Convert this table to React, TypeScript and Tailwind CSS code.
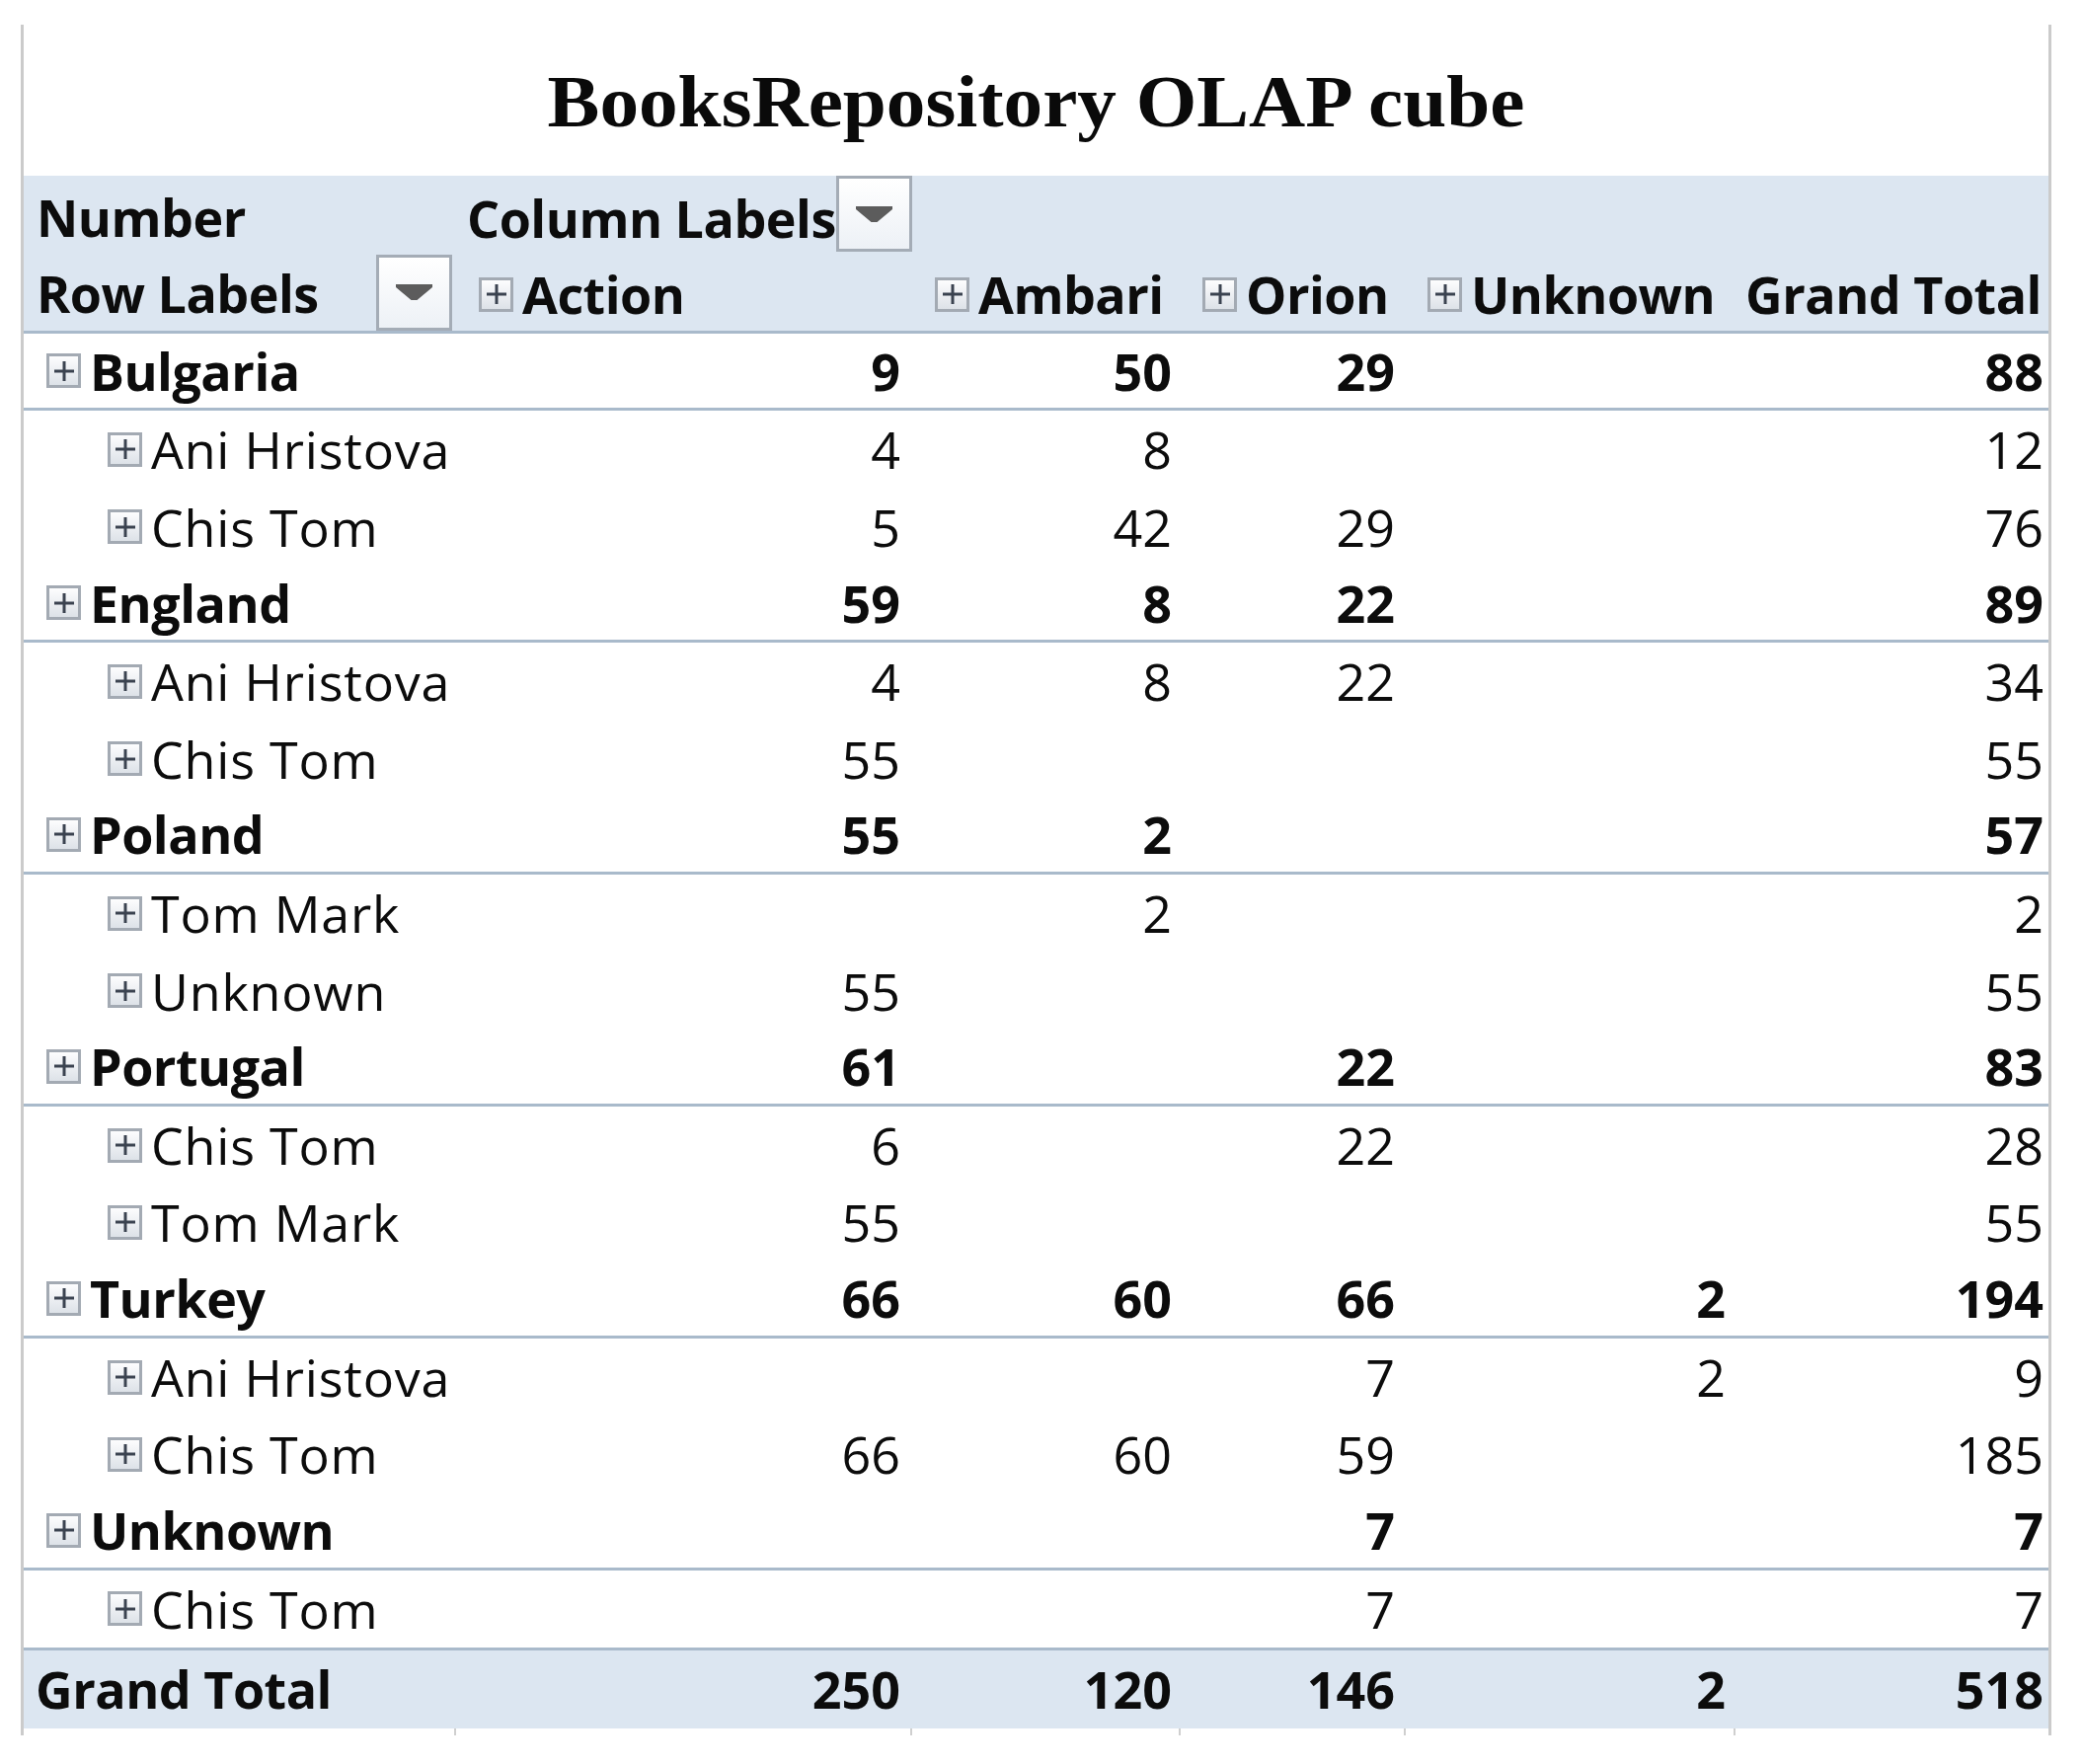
import React from "react";

type Row = { label: string; level: 0 | 1; v: (number | null)[] };

const rows: Row[] = [
  { label: "Bulgaria", level: 0, v: [9, 50, 29, null, 88] },
  { label: "Ani Hristova", level: 1, v: [4, 8, null, null, 12] },
  { label: "Chis Tom", level: 1, v: [5, 42, 29, null, 76] },
  { label: "England", level: 0, v: [59, 8, 22, null, 89] },
  { label: "Ani Hristova", level: 1, v: [4, 8, 22, null, 34] },
  { label: "Chis Tom", level: 1, v: [55, null, null, null, 55] },
  { label: "Poland", level: 0, v: [55, 2, null, null, 57] },
  { label: "Tom Mark", level: 1, v: [null, 2, null, null, 2] },
  { label: "Unknown", level: 1, v: [55, null, null, null, 55] },
  { label: "Portugal", level: 0, v: [61, null, 22, null, 83] },
  { label: "Chis Tom", level: 1, v: [6, null, 22, null, 28] },
  { label: "Tom Mark", level: 1, v: [55, null, null, null, 55] },
  { label: "Turkey", level: 0, v: [66, 60, 66, 2, 194] },
  { label: "Ani Hristova", level: 1, v: [null, null, 7, 2, 9] },
  { label: "Chis Tom", level: 1, v: [66, 60, 59, null, 185] },
  { label: "Unknown", level: 0, v: [null, null, 7, null, 7] },
  { label: "Chis Tom", level: 1, v: [null, null, 7, null, 7] },
];

const grand = [250, 120, 146, 2, 518];

const numPad = ["pr-[11px]", "pr-[8px]", "pr-[10px]", "pr-[9px]", "pr-[5px]"];

const gridCols = "grid grid-cols-[437px_462px_272px_228px_334px_318px]";

function PlusBox({ className = "" }: { className?: string }) {
  return (
    <span
      className={`flex h-[35px] w-[35px] shrink-0 items-center justify-center border-[3px] border-[#a3aab3] bg-linear-to-b from-[#fdfdfe] to-[#dde2e8] ${className}`}
    >
      <svg width="20" height="20" viewBox="0 0 20 20">
        <path d="M0 10H20M10 0V20" stroke="#3b4350" strokeWidth="3" />
      </svg>
    </span>
  );
}

function Dropdown({ className = "" }: { className?: string }) {
  return (
    <span
      className={`flex h-[77px] w-[77px] shrink-0 items-center justify-center border-[3px] border-[#a4acb6] bg-linear-to-b from-white to-[#edf1f6] ${className}`}
    >
      <svg width="37" height="16" viewBox="0 0 37 16">
        <path d="M0 0H37V3L21.5 16H15.5L0 3Z" fill="#5c5c5c" />
      </svg>
    </span>
  );
}

function HeadItem({ label, ml }: { label: string; ml: string }) {
  return (
    <div className={`flex items-center pt-[5px] ${ml}`}>
      <PlusBox />
      <span className="ml-[9px] whitespace-nowrap font-bold tracking-[-0.5px]">{label}</span>
    </div>
  );
}

export default function App() {
  return (
    <div className="min-h-[1787px] w-full bg-white pt-[25px]">
      <div className="ml-[21px] w-[2057px] border-x-[3px] border-[#cbcbcb]">
        <div className="h-[153px] pt-[41px] text-center">
          <span className="inline-block scale-x-[1.07] font-['Liberation_Serif',serif] text-[74px] font-bold leading-none text-[#0a0a0a]">
            BooksRepository OLAP cube
          </span>
        </div>

        <div className="font-['Open_Sans',sans-serif] text-[52px] leading-none text-[#0c0c0c]">
          {/* header row 1 */}
          <div className={`${gridCols} h-[78.5px] bg-[#dce6f1]`}>
            <div className="flex items-center pl-[13px] pt-[5px]">
              <span className="whitespace-nowrap font-bold tracking-[-0.5px]">Number</span>
            </div>
            <div className="flex items-center justify-between">
              <span className="mt-[8px] whitespace-nowrap pl-[12px] font-bold tracking-[-0.5px]">
                Column Labels
              </span>
              <Dropdown className="mr-[3px] self-start" />
            </div>
            <div />
            <div />
            <div />
            <div />
          </div>

          {/* header row 2 */}
          <div className={`${gridCols} h-[81.5px] border-b-[3px] border-[#a9bacb] bg-[#dce6f1]`}>
            <div className="flex items-center justify-between">
              <span className="mt-[3px] whitespace-nowrap pl-[13px] font-bold tracking-[-0.5px]">
                Row Labels
              </span>
              <Dropdown className="mr-[3px] mt-[1px] self-start" />
            </div>
            <HeadItem label="Action" ml="ml-[24px]" />
            <HeadItem label="Ambari" ml="ml-[24px]" />
            <HeadItem label="Orion" ml="ml-[23px]" />
            <HeadItem label="Unknown" ml="ml-[23px]" />
            <div className="flex items-center pl-[11px] pt-[5px]">
              <span className="whitespace-nowrap font-bold tracking-[-0.5px]">Grand Total</span>
            </div>
          </div>

          {/* body */}
          {rows.map((r, i) => {
            const country = r.level === 0;
            return (
              <div
                key={i}
                className={`${gridCols} h-[78.3px] ${
                  country ? "border-b-[3px] border-[#a9bacb] font-bold" : "font-normal"
                }`}
              >
                <div className={`flex items-center ${country ? "pl-[23px]" : "pl-[85px]"}`}>
                  <PlusBox />
                  <span
                    className={`ml-[9px] whitespace-nowrap ${
                      country ? "tracking-[-0.5px]" : "tracking-[0.8px]"
                    }`}
                  >
                    {r.label}
                  </span>
                </div>
                {r.v.map((n, j) => (
                  <div key={j} className={`flex items-center justify-end ${numPad[j]}`}>
                    {n === null ? "" : n}
                  </div>
                ))}
              </div>
            );
          })}

          {/* grand total */}
          <div className={`${gridCols} h-[81.7px] border-t-[3px] border-[#a9bacb] bg-[#dce6f1] font-bold`}>
            <div className="flex items-center pl-[12px]">
              <span className="whitespace-nowrap tracking-[-0.5px]">Grand Total</span>
            </div>
            {grand.map((n, j) => (
              <div key={j} className={`flex items-center justify-end ${numPad[j]}`}>
                {n}
              </div>
            ))}
          </div>

          {/* gridline stubs */}
          <div className={`${gridCols} h-[7px]`}>
            <div />
            <div className="-ml-[1px] border-l-[2px] border-[#cfcfcf]" />
            <div className="-ml-[1px] border-l-[2px] border-[#cfcfcf]" />
            <div className="-ml-[1px] border-l-[2px] border-[#cfcfcf]" />
            <div className="-ml-[1px] border-l-[2px] border-[#cfcfcf]" />
            <div className="-ml-[1px] border-l-[2px] border-[#cfcfcf]" />
          </div>
        </div>
      </div>
    </div>
  );
}
